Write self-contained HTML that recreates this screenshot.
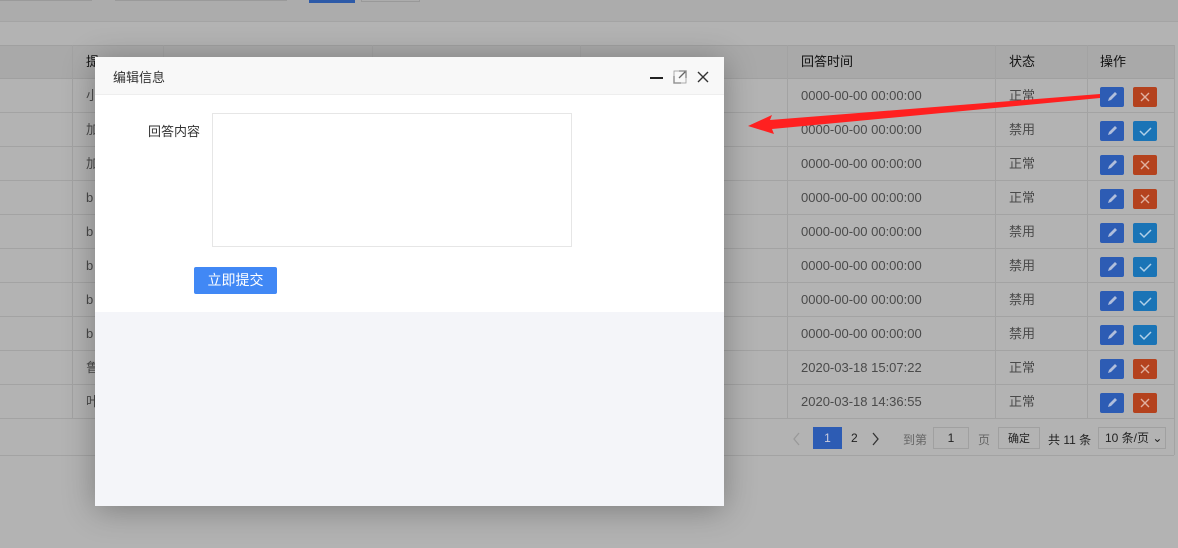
<!DOCTYPE html><html><head><meta charset="utf-8"><style>
*{margin:0;padding:0;box-sizing:border-box}
body{width:1178px;height:548px;overflow:hidden;background:#b3b3b3;font-family:"Liberation Sans","Noto Sans CJK SC",sans-serif;font-size:13px;color:#222;position:relative}
.a{position:absolute}
.row{position:absolute;left:0;width:1174px;height:34px;border-bottom:1px solid #a3a3a3}
.vl{position:absolute;top:45px;height:374px;width:1px;background:#a3a3a3}
.t{position:absolute;line-height:34px;color:#4a4a4a}
</style></head><body>
<div class="a" style="left:0;top:0;width:1178px;height:22px;background:#acacac;border-bottom:1px solid #a4a4a4"></div>
<div class="a" style="left:0;top:0;width:92px;height:1px;background:#9a9a9a"></div>
<div class="a" style="left:115px;top:0;width:172px;height:1px;background:#9a9a9a"></div>
<div class="a" style="left:309px;top:0;width:46px;height:3px;background:#2d5aa8"></div>
<div class="a" style="left:361px;top:0;width:59px;height:2px;border:1px solid #999;border-top:0"></div>
<div class="a" style="left:0;top:45px;width:1174px;height:34px;background:#a9a9a9;border-top:1px solid #a0a0a0;border-bottom:1px solid #a0a0a0"></div>
<div class="a" style="left:1174px;top:45px;width:1px;height:410px;background:#a3a3a3"></div>
<div class="vl" style="left:72px"></div><div class="vl" style="left:163px"></div><div class="vl" style="left:372px"></div><div class="vl" style="left:580px"></div><div class="vl" style="left:787px"></div><div class="vl" style="left:995px"></div><div class="vl" style="left:1087px"></div>
<div class="t" style="left:801px;top:45px;color:#111">回答时间</div>
<div class="t" style="left:1009px;top:45px;color:#111">状态</div>
<div class="t" style="left:1100px;top:45px;color:#111">操作</div>
<div class="t" style="left:86px;top:45px;color:#111">提</div>
<div class="a" style="left:0;top:455px;width:1174px;height:1px;background:#a3a3a3"></div>
<div class="row" style="top:79px"></div><div class="row" style="top:113px"></div><div class="row" style="top:147px"></div><div class="row" style="top:181px"></div><div class="row" style="top:215px"></div><div class="row" style="top:249px"></div><div class="row" style="top:283px"></div><div class="row" style="top:317px"></div><div class="row" style="top:351px"></div><div class="row" style="top:385px"></div>
<div class="t" style="left:86px;top:79px">小</div><div class="t" style="left:86px;top:113px">加</div><div class="t" style="left:86px;top:147px">加</div><div class="t" style="left:86px;top:181px">b</div><div class="t" style="left:86px;top:215px">b</div><div class="t" style="left:86px;top:249px">b</div><div class="t" style="left:86px;top:283px">b</div><div class="t" style="left:86px;top:317px">b</div><div class="t" style="left:86px;top:351px">鲁</div><div class="t" style="left:86px;top:385px">叶</div>
<div class="t" style="left:801px;top:79px">0000-00-00 00:00:00</div><div class="t" style="left:1009px;top:79px">正常</div>
<div class="t" style="left:801px;top:113px">0000-00-00 00:00:00</div><div class="t" style="left:1009px;top:113px">禁用</div>
<div class="t" style="left:801px;top:147px">0000-00-00 00:00:00</div><div class="t" style="left:1009px;top:147px">正常</div>
<div class="t" style="left:801px;top:181px">0000-00-00 00:00:00</div><div class="t" style="left:1009px;top:181px">正常</div>
<div class="t" style="left:801px;top:215px">0000-00-00 00:00:00</div><div class="t" style="left:1009px;top:215px">禁用</div>
<div class="t" style="left:801px;top:249px">0000-00-00 00:00:00</div><div class="t" style="left:1009px;top:249px">禁用</div>
<div class="t" style="left:801px;top:283px">0000-00-00 00:00:00</div><div class="t" style="left:1009px;top:283px">禁用</div>
<div class="t" style="left:801px;top:317px">0000-00-00 00:00:00</div><div class="t" style="left:1009px;top:317px">禁用</div>
<div class="t" style="left:801px;top:351px">2020-03-18 15:07:22</div><div class="t" style="left:1009px;top:351px">正常</div>
<div class="t" style="left:801px;top:385px">2020-03-18 14:36:55</div><div class="t" style="left:1009px;top:385px">正常</div>
<svg class="a" style="left:1100px;top:79px" width="60" height="340">
<defs>
<g id="e"><rect width="24" height="20" rx="2" fill="#2d5cb4"/><path d="M8 14l1-3 6-6 2 2-6 6z" fill="#b0bedc"/></g>
<g id="x"><rect width="24" height="20" rx="2" fill="#b4421e"/><path d="M8 6l8 8M16 6l-8 8" stroke="#e0b0a0" stroke-width="1.4"/></g>
<g id="c"><rect width="24" height="20" rx="2" fill="#1a74b6"/><path d="M7 10l4 4 7-7" stroke="#b0d0e8" stroke-width="1.5" fill="none"/></g>
</defs>
<use href="#e" y="8"/><use href="#x" x="33" y="8"/>
<use href="#e" y="42"/><use href="#c" x="33" y="42"/>
<use href="#e" y="76"/><use href="#x" x="33" y="76"/>
<use href="#e" y="110"/><use href="#x" x="33" y="110"/>
<use href="#e" y="144"/><use href="#c" x="33" y="144"/>
<use href="#e" y="178"/><use href="#c" x="33" y="178"/>
<use href="#e" y="212"/><use href="#c" x="33" y="212"/>
<use href="#e" y="246"/><use href="#c" x="33" y="246"/>
<use href="#e" y="280"/><use href="#x" x="33" y="280"/>
<use href="#e" y="314"/><use href="#x" x="33" y="314"/>
</svg>
<svg class="a" style="left:790px;top:431px" width="110" height="16"><path d="M9 2L4 8l5 6" stroke="#999" fill="none" stroke-width="1.3"/><path d="M83 2l5 6-5 6" stroke="#333" fill="none" stroke-width="1.3"/></svg>
<div class="a" style="left:813px;top:427px;width:29px;height:22px;background:#2d5cb4;color:#ccd;text-align:center;line-height:22px;font-size:12px">1</div>
<div class="a" style="left:851px;top:431px;font-size:12px">2</div>
<div class="a" style="left:903px;top:431px;font-size:12px;color:#666">到第</div>
<div class="a" style="left:933px;top:427px;width:36px;height:22px;border:1px solid #a0a0a0;text-align:center;line-height:20px;font-size:12px">1</div>
<div class="a" style="left:978px;top:431px;font-size:12px;color:#666">页</div>
<div class="a" style="left:998px;top:427px;width:42px;height:22px;border:1px solid #a0a0a0;text-align:center;line-height:22px;font-size:11px">确定</div>
<div class="a" style="left:1048px;top:431px;font-size:12px">共 11 条</div>
<div class="a" style="left:1098px;top:427px;width:68px;height:22px;border:1px solid #a0a0a0;line-height:20px;font-size:12px;padding-left:6px">10 条/页 ⌄</div>
<svg class="a" style="left:0;top:0" width="1178" height="548"><polygon points="1100,94 770,120 772,115 748,126 774,134 772,129 1100,98" fill="#ff2020"/></svg>
<div class="a" style="left:95px;top:57px;width:629px;height:449px;background:#f4f5f9;box-shadow:0 4px 30px rgba(0,0,0,.3)">
<div style="height:38px;background:#f8f8f8;border-bottom:1px solid #eee;position:relative">
<div class="a" style="left:18px;top:10px;color:#333;font-size:13px">编辑信息</div>
<div class="a" style="left:555px;top:20px;width:13px;height:2px;background:#222"></div>
<svg class="a" style="left:578px;top:13px" width="14" height="14"><path d="M1 6V13H8" stroke="#666" fill="none" stroke-width="1.3"/><path d="M6 1H13V8M13 1L6 8" stroke="#666" fill="none" stroke-width="1.3"/><rect x="1" y="1" width="12" height="12" fill="none" stroke="#999" stroke-width="0.8"/></svg>
<svg class="a" style="left:602px;top:14px" width="12" height="12"><path d="M1 1L11 11M11 1L1 11" stroke="#333" stroke-width="1.4"/></svg>
</div>
<div style="height:217px;background:#fff;position:relative">
<div class="a" style="left:53px;top:26px;color:#333;font-size:13px">回答内容</div>
<div class="a" style="left:117px;top:18px;width:360px;height:134px;border:1px solid #e6e6e6"></div>
<div class="a" style="left:99px;top:172px;width:83px;height:27px;background:#4188f5;color:#fff;text-align:center;line-height:27px;font-size:14px;border-radius:2px">立即提交</div>
</div>
</div>
</body></html>
